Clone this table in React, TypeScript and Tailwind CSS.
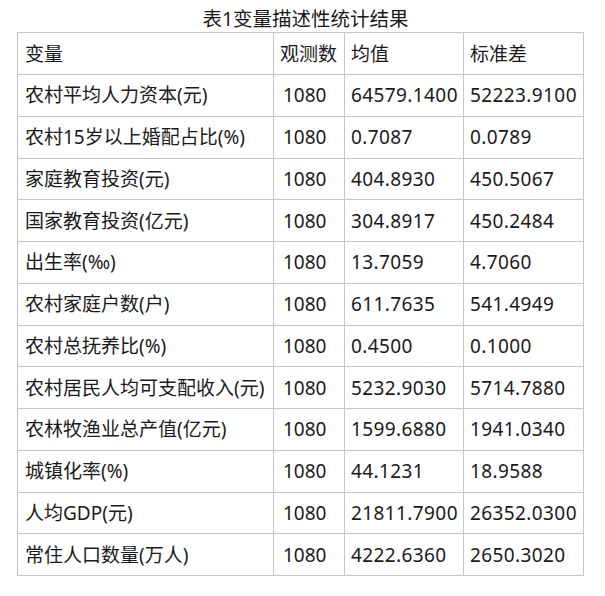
const rows: [string, string, string, string][] = [
  ['农村平均人力资本(元)', '1080', '64579.1400', '52223.9100'],
  ['农村15岁以上婚配占比(%)', '1080', '0.7087', '0.0789'],
  ['家庭教育投资(元)', '1080', '404.8930', '450.5067'],
  ['国家教育投资(亿元)', '1080', '304.8917', '450.2484'],
  ['出生率(‰)', '1080', '13.7059', '4.7060'],
  ['农村家庭户数(户)', '1080', '611.7635', '541.4949'],
  ['农村总抚养比(%)', '1080', '0.4500', '0.1000'],
  ['农村居民人均可支配收入(元)', '1080', '5232.9030', '5714.7880'],
  ['农林牧渔业总产值(亿元)', '1080', '1599.6880', '1941.0340'],
  ['城镇化率(%)', '1080', '44.1231', '18.9588'],
  ['人均GDP(元)', '1080', '21811.7900', '26352.0300'],
  ['常住人口数量(万人)', '1080', '4222.6360', '2650.3020'],
];

export default function App() {
  return (
    <div
      className="w-[605px] h-[596px] bg-white text-[#1a1a1a] pl-[17px] pt-[5px]"
      style={{ fontFamily: '"Noto Sans", "Noto Sans CJK SC", sans-serif' }}
    >
      <div className="w-[577px] text-center text-[19.5px] leading-[27px]">表1变量描述性统计结果</div>
      <table className="border-collapse text-[19px] leading-[24px] table-fixed w-[566px]">
        <colgroup>
          <col className="w-[256px]" />
          <col className="w-[71px]" />
          <col className="w-[119px]" />
          <col className="w-[120px]" />
        </colgroup>
        <tbody>
          <tr className="h-[42px]">
            <td className="border border-[#c6c6c8] px-[7px] whitespace-nowrap">变量</td>
            <td className="border border-[#c6c6c8] px-[6px] whitespace-nowrap">观测数</td>
            <td className="border border-[#c6c6c8] px-[6px] whitespace-nowrap">均值</td>
            <td className="border border-[#c6c6c8] px-[6px] whitespace-nowrap">标准差</td>
          </tr>
          {rows.map((r) => (
            <tr key={r[0]} className="h-[41.75px]">
              <td className="border border-[#c6c6c8] px-[7px] whitespace-nowrap">{r[0]}</td>
              <td className="border border-[#c6c6c8] px-[9px] whitespace-nowrap">{r[1]}</td>
              <td className="border border-[#c6c6c8] px-[6px] whitespace-nowrap tracking-[0.4px]">{r[2]}</td>
              <td className="border border-[#c6c6c8] px-[6px] whitespace-nowrap tracking-[0.4px]">{r[3]}</td>
            </tr>
          ))}
        </tbody>
      </table>
    </div>
  );
}
